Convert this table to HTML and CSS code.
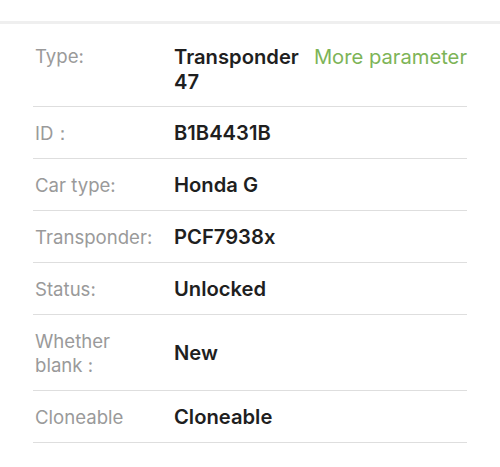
FILE: index.html
```html
<!DOCTYPE html>
<html>
<head>
<meta charset="utf-8">
<link rel="stylesheet" href="styles.css">
</head>
<body>
<div class="topbar"></div>
<div class="list">
  <div class="row row-type">
    <div class="label">Type:</div>
    <div class="value">Transponder 47</div>
    <div class="more">More parameter</div>
  </div>
  <div class="row">
    <div class="label">ID：</div>
    <div class="value">B1B4431B</div>
  </div>
  <div class="row">
    <div class="label">Car type:</div>
    <div class="value">Honda G</div>
  </div>
  <div class="row">
    <div class="label">Transponder:</div>
    <div class="value">PCF7938x</div>
  </div>
  <div class="row">
    <div class="label">Status:</div>
    <div class="value">Unlocked</div>
  </div>
  <div class="row row-tall">
    <div class="label label-wrap">Whether blank :</div>
    <div class="value">New</div>
  </div>
  <div class="row">
    <div class="label">Cloneable</div>
    <div class="value">Cloneable</div>
  </div>
</div>
</body>
</html>
```
FILE: styles.css
```css
html, body {
  margin: 0;
  padding: 0;
  background: #ffffff;
}
body {
  width: 500px;
  height: 467px;
  overflow: hidden;
  font-family: Inter, "Noto Sans", "Liberation Sans", sans-serif;
  padding-top: 21px;
  box-sizing: border-box;
}
.topbar {
  height: 3px;
  background: #efefef;
}
.list {
  padding: 0 33px;
}
.row {
  display: flex;
  align-items: center;
  min-height: 51px;
  border-bottom: 1px solid #dedede;
  padding-left: 2px;
}
.row-type {
  align-items: flex-start;
  padding-top: 20px;
  padding-bottom: 12px;
  min-height: 0;
}
.row-tall {
  min-height: 75px;
}
.label {
  width: 139px;
  flex: none;
  font-size: 18.6px;
  line-height: 24px;
  color: #9a9a9a;
  font-weight: 400;
}
.label-wrap {
  width: 90px;
  margin-right: 49px;
}
.value {
  flex: 1;
  font-size: 20.2px;
  line-height: 25px;
  font-weight: 600;
  color: #1f1f1f;
}
.more {
  flex: none;
  font-size: 20.2px;
  line-height: 25px;
  color: #7db457;
  margin-left: 12px;
}
```
